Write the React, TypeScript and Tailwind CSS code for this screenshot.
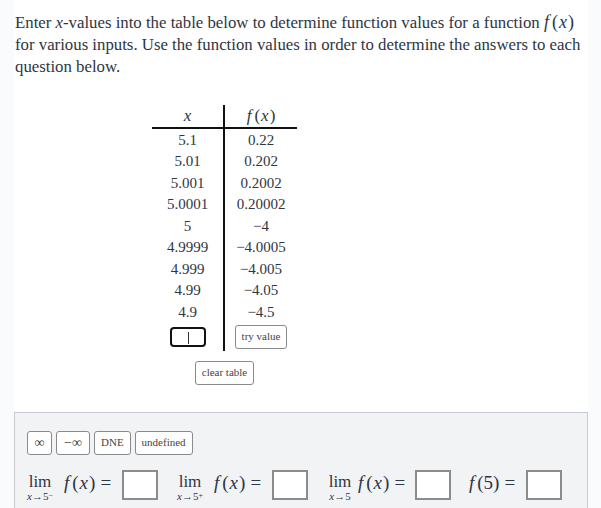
import type { ReactNode } from 'react';

const serif = "font-['Liberation_Serif',serif]";

const rows: [string, string][] = [
  ['5.1', '0.22'],
  ['5.01', '0.202'],
  ['5.001', '0.2002'],
  ['5.0001', '0.20002'],
  ['5', '\u22124'],
  ['4.9999', '\u22124.0005'],
  ['4.999', '\u22124.005'],
  ['4.99', '\u22124.05'],
  ['4.9', '\u22124.5'],
];

function Fx({ arg = 'x' }: { arg?: string }) {
  return (
    <span className="whitespace-nowrap">
      <i className="mr-[3px]">f</i>
      <span>(</span>
      {arg === 'x' ? <i className="px-[1px]">x</i> : <span>{arg}</span>}
      <span>)</span>
    </span>
  );
}

function SmallButton({ children, className = '' }: { children: ReactNode; className?: string }) {
  return (
    <button
      className={`h-[24px] rounded-[3px] border border-[#8a8a8a] bg-white px-[6px] text-[11px] text-[#444] ${className}`}
    >
      {children}
    </button>
  );
}

function AnswerBox() {
  return <span className="inline-block h-[30px] w-[36px] shrink-0 border-2 border-[#8c8c8c] bg-white" />;
}

function Limit({ sup, width, gap }: { sup?: string; width: string; gap: string }) {
  return (
    <div className="flex items-start">
      <div className={`flex h-[30px] items-start ${width}`}>
        <div className="flex w-[26px] flex-col items-center pt-[3px]">
          <span className="text-[17px] leading-[17px]">lim</span>
          <span className="mt-[1px] whitespace-nowrap text-[11px] leading-[11px]">
            <i>x</i>→5
            {sup ? <span className="relative -top-[2px] text-[8px] leading-none">{sup}</span> : null}
          </span>
        </div>
        <span className={`${gap} whitespace-nowrap pt-[1px] text-[19px] leading-[24px]`}>
          <Fx />
          <span className="ml-[5px]">=</span>
        </span>
      </div>
      <AnswerBox />
    </div>
  );
}

export default function App() {
  return (
    <div className={`min-h-[508px] bg-[#fafbfc] ${serif}`}>
      <div className="mx-[14px] mr-[13px] min-h-[508px] overflow-hidden bg-white text-[#2f3542]">
        <p className="whitespace-nowrap pl-[1px] pt-[12px] text-[16.8px] leading-[22px]">
          Enter <i>x</i>-values into the table below to determine function values for a function{' '}
          <span className="text-[18px] leading-[0]">
            <Fx />
          </span>
          <br />
          for various inputs. Use the function values in order to determine the answers to each
          <br />
          question below.
        </p>

        <div className="ml-[138px] mt-[27px] flex w-[145px] flex-col items-center">
          <div className="flex w-full text-[15px]">
            <div className="w-[73px] border-r-2 border-[#111]">
              <div className="flex h-[24px] items-center justify-center border-b-2 border-[#111] text-[17px]">
                <i>x</i>
              </div>
              {rows.map(([x]) => (
                <div key={x} className="flex h-[21.5px] items-center justify-center">
                  {x}
                </div>
              ))}
              <div className="flex h-[28px] items-center justify-center">
                <span className="relative inline-block h-[20px] w-[36px] rounded-[4px] border-2 border-[#111]">
                  <span className="absolute left-[16px] top-[3px] h-[12px] w-px bg-[#333]" />
                </span>
              </div>
            </div>
            <div className="w-[72px]">
              <div className="flex h-[24px] items-center justify-center border-b-2 border-[#111] text-[17px]">
                <Fx />
              </div>
              {rows.map(([x, y]) => (
                <div key={x} className="flex h-[21.5px] items-center justify-center">
                  {y}
                </div>
              ))}
              <div className="flex h-[28px] items-center justify-center">
                <SmallButton>try value</SmallButton>
              </div>
            </div>
          </div>
          <SmallButton className="mt-[10px]">clear table</SmallButton>
        </div>

        <div className="mt-[27px] min-h-[100px] border border-[#c8ccd2] bg-[#f2f3f5] pl-[12px] pt-[18px]">
          <div className="flex gap-[4px]">
            <SmallButton className="w-[25px] px-0 text-[14px]">∞</SmallButton>
            <SmallButton className="w-[34px] px-0 text-[14px]">−∞</SmallButton>
            <SmallButton>DNE</SmallButton>
            <SmallButton>undefined</SmallButton>
          </div>
          <div className="mt-[15px] flex items-start">
            <Limit sup="−" width="w-[95px]" gap="ml-[11px]" />
            <div className="w-[19px]" />
            <Limit sup="+" width="w-[95px]" gap="ml-[11px]" />
            <div className="w-[19px]" />
            <Limit width="w-[88px]" gap="ml-[5px]" />
            <div className="w-[18px]" />
            <div className="flex items-start">
              <span className="h-[30px] w-[57px] whitespace-nowrap pt-[1px] text-[19px] leading-[24px]">
                <Fx arg="5" />
                <span className="ml-[5px]">=</span>
              </span>
              <AnswerBox />
            </div>
          </div>
        </div>
      </div>
    </div>
  );
}
